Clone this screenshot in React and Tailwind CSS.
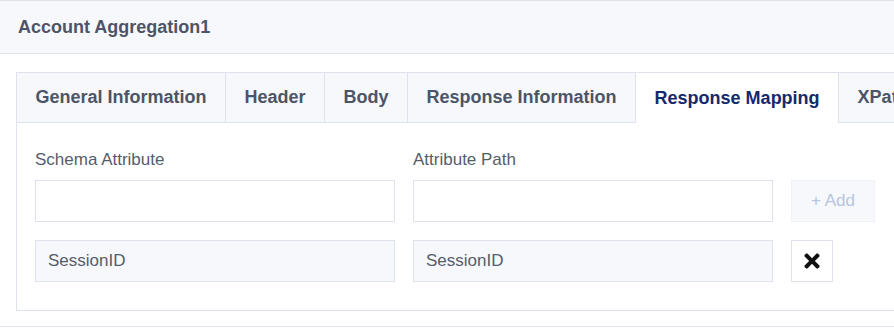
import { FaTimes } from 'react-icons/fa';

const tabs = ['General Information', 'Header', 'Body', 'Response Information', 'Response Mapping', 'XPath'];

const Tab = ({ label, active }) => (
  <div
    className={`h-[50px] px-[18.5px] flex items-center shrink-0 text-[18px] font-bold border-r border-[#dde2ec] ${
      active ? 'bg-white text-[#14296b] border-b-white' : 'bg-[#f7f8fb] text-[#4c5567] border-b border-[#dde2ec]'
    }`}
  >
    {label}
  </div>
);

export default function App() {
  return (
    <div className="w-[894px] h-[336px] overflow-hidden bg-white font-['Liberation_Sans',Arial,sans-serif]">
      <div className="h-[54px] bg-[#f7f8fb] border-t border-b border-[#dfe3ec] flex items-center px-[18px]">
        <h1 className="text-[18px] font-bold text-[#4c5567]">Account Aggregation1</h1>
      </div>

      <div className="pt-[18px] pb-[15px] pl-[16px] border-b border-[#dfe3ec]">
        <div className="w-[900px] border border-[#dde2ec]">
          <div className="flex">
            {tabs.map((t) => (
              <Tab key={t} label={t} active={t === 'Response Mapping'} />
            ))}
            <div className="flex-1 border-b border-[#dde2ec] bg-[#f7f8fb]" />
          </div>

          <div className="pl-[18px] pt-[27px] pb-[28px]">
            <div className="flex gap-[18px] text-[17px] leading-[20px] text-[#555d6b] mb-[10px]">
              <div className="w-[360px]">Schema Attribute</div>
              <div className="w-[360px]">Attribute Path</div>
            </div>

            <div className="flex gap-[18px] mb-[18px]">
              <input className="w-[360px] h-[42px] border border-[#dde2ec] bg-white outline-none px-3" />
              <input className="w-[360px] h-[42px] border border-[#dde2ec] bg-white outline-none px-3" />
              <button className="w-[84px] h-[42px] bg-[#f6f8fb] border border-[#eff2f7] text-[17px] text-[#b7c5e0]">
                + Add
              </button>
            </div>

            <div className="flex gap-[18px]">
              <div className="w-[360px] h-[42px] border border-[#dde2ec] bg-[#f6f8fb] px-[12px] flex items-center text-[17px] text-[#555d6b]">
                SessionID
              </div>
              <div className="w-[360px] h-[42px] border border-[#dde2ec] bg-[#f6f8fb] px-[12px] flex items-center text-[17px] text-[#555d6b]">
                SessionID
              </div>
              <button className="w-[42px] h-[42px] border border-[#dde2ec] bg-white flex items-center justify-center">
                <FaTimes size={22} className="text-[#111]" />
              </button>
            </div>
          </div>
        </div>
      </div>
    </div>
  );
}
